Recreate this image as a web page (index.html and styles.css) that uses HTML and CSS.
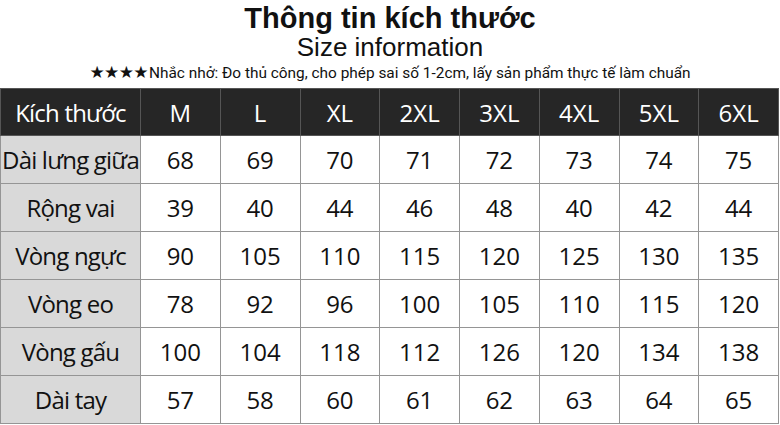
FILE: index.html
```html
<!DOCTYPE html>
<html lang="vi">
<head>
<meta charset="utf-8">
<link rel="stylesheet" href="styles.css">
</head>
<body>
<div class="page">
  <header class="heading">
    <h1 class="title">Thông tin kích thước</h1>
    <p class="subtitle">Size information</p>
    <p class="note"><span class="stars">★★★★</span>Nhắc nhở: Đo thủ công, cho phép sai số 1-2cm, lấy sản phẩm thực tế làm chuẩn</p>
  </header>
  <table class="sizes">
    <thead>
      <tr><th>Kích thước</th><th>M</th><th>L</th><th>XL</th><th>2XL</th><th>3XL</th><th>4XL</th><th>5XL</th><th>6XL</th></tr>
    </thead>
    <tbody>
      <tr><th>Dài lưng giữa</th><td>68</td><td>69</td><td>70</td><td>71</td><td>72</td><td>73</td><td>74</td><td>75</td></tr>
      <tr><th>Rộng vai</th><td>39</td><td>40</td><td>44</td><td>46</td><td>48</td><td>40</td><td>42</td><td>44</td></tr>
      <tr><th>Vòng ngực</th><td>90</td><td>105</td><td>110</td><td>115</td><td>120</td><td>125</td><td>130</td><td>135</td></tr>
      <tr><th>Vòng eo</th><td>78</td><td>92</td><td>96</td><td>100</td><td>105</td><td>110</td><td>115</td><td>120</td></tr>
      <tr><th>Vòng gấu</th><td>100</td><td>104</td><td>118</td><td>112</td><td>126</td><td>120</td><td>134</td><td>138</td></tr>
      <tr><th>Dài tay</th><td>57</td><td>58</td><td>60</td><td>61</td><td>62</td><td>63</td><td>64</td><td>65</td></tr>
    </tbody>
  </table>
</div>
</body>
</html>
```
FILE: styles.css
```css
html, body {
  margin: 0;
  padding: 0;
  background: #fff;
}
.page {
  width: 780px;
  height: 425px;
  overflow: hidden;
}
.heading {
  text-align: center;
  color: #111;
  height: 88px;
}
.title {
  margin: 0;
  padding-top: 3px;
  font-family: "Liberation Sans", Arial, sans-serif;
  font-weight: bold;
  font-size: 29px;
  line-height: 31px;
}
.subtitle {
  margin: 0;
  font-family: "Liberation Sans", Arial, sans-serif;
  font-size: 26px;
  line-height: 26px;
}
.note {
  margin: 0;
  font-family: Roboto, "Liberation Sans", sans-serif;
  font-size: 15.4px;
  line-height: 24px;
}
.stars {
  font-family: "DejaVu Sans", sans-serif;
  font-size: 17px;
  letter-spacing: -0.6px;
  margin-right: 1px;
}
.sizes {
  border-collapse: collapse;
  table-layout: fixed;
  width: 779px;
  font-family: "Open Sans", "Noto Sans", sans-serif;
  font-size: 24px;
  color: #111;
}
.sizes th, .sizes td {
  border: 1px solid #959595;
  text-align: center;
  font-weight: normal;
  padding: 0;
  height: 47px;
}
.sizes thead th {
  background: #262626;
  color: #fff;
  border-color: #555;
  height: 46px;
}
.sizes thead th:first-child {
  width: 139px;
  letter-spacing: -0.8px;
}
.sizes tbody th {
  background: #d9d9d9;
  white-space: nowrap;
  letter-spacing: -0.8px;
}
.sizes tbody td {
  background: #fff;
}
```
